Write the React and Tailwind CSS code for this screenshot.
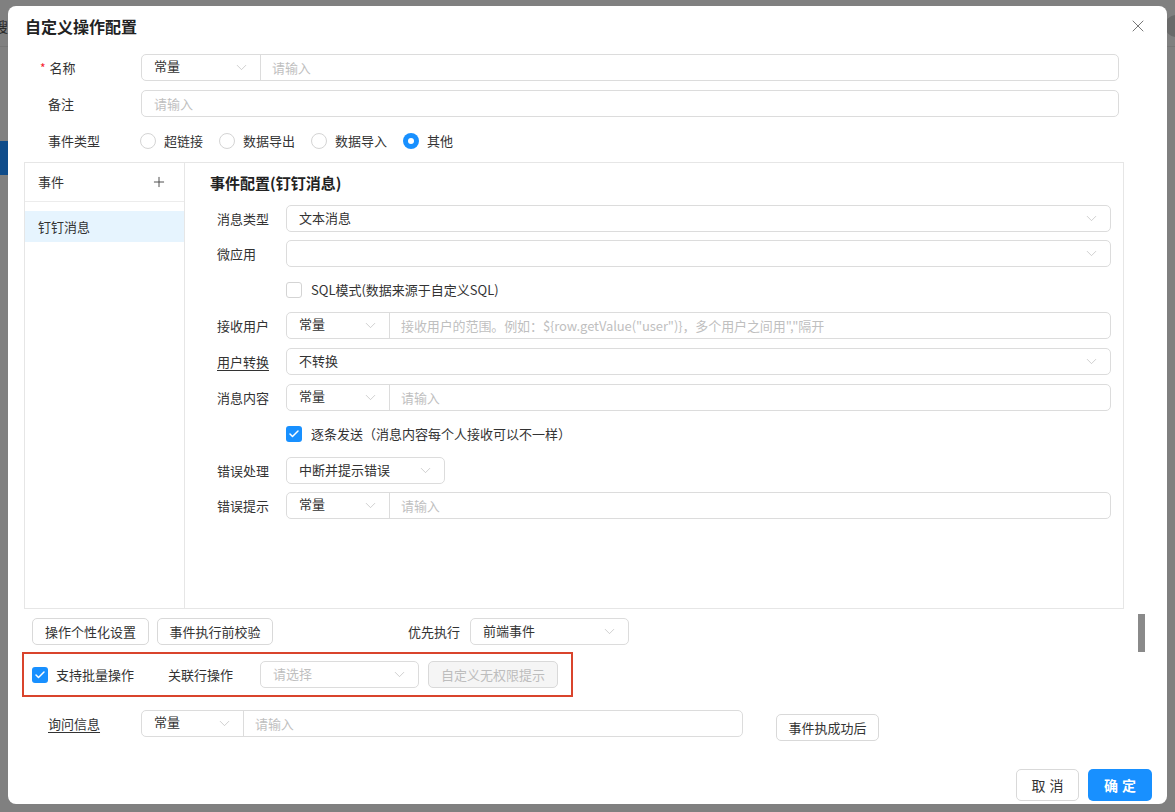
import { ChevronDown, X, Plus, Check } from 'lucide-react';

function Chevron() {
  return <ChevronDown size={17} strokeWidth={1} className="text-[#bdbdbd] shrink-0" />;
}

function Select({ value, placeholder, className = '' }) {
  return (
    <div className={`flex items-center justify-between h-[27px] border border-[#dcdcdc] rounded-[5px] bg-white pl-[12px] pr-[10px] ${className}`}>
      {value ? (
        <span className="text-[#333] pb-[2px]">{value}</span>
      ) : (
        <span className="text-[#bfbfbf] pb-[2px]">{placeholder || ''}</span>
      )}
      <Chevron />
    </div>
  );
}

function Group({ value = '常量', placeholder = '请输入', selW = 'w-[103px]', className = '' }) {
  return (
    <div className={`flex h-[27px] border border-[#dcdcdc] rounded-[5px] bg-white ${className}`}>
      <div className={`flex items-center justify-between pl-[12px] pr-[10px] border-r border-[#dcdcdc] ${selW}`}>
        <span className="text-[#333] pb-[3px]">{value}</span>
        <Chevron />
      </div>
      <div className="flex-1 flex items-center pl-[11px] text-[#bfbfbf] whitespace-nowrap overflow-hidden tracking-[-0.1px]">{placeholder}</div>
    </div>
  );
}

function Input({ placeholder = '请输入', className = '' }) {
  return (
    <div className={`flex items-center h-[27px] border border-[#dcdcdc] rounded-[5px] pl-[12px] text-[#bfbfbf] ${className}`}>
      {placeholder}
    </div>
  );
}

function Radio({ label, checked }) {
  return (
    <div className="flex items-center mr-[16px]">
      {checked ? (
        <div className="w-[16px] h-[16px] rounded-full bg-[#1890ff] flex items-center justify-center">
          <div className="w-[6px] h-[6px] rounded-full bg-white" />
        </div>
      ) : (
        <div className="w-[16px] h-[16px] rounded-full border border-[#d4d4d4] bg-white" />
      )}
      <span className="ml-[8px] text-[#333]">{label}</span>
    </div>
  );
}

function CheckBox({ checked }) {
  return checked ? (
    <div className="w-[16px] h-[16px] rounded-[3px] bg-[#1890ff] flex items-center justify-center shrink-0">
      <Check size={12} strokeWidth={3} className="text-white" />
    </div>
  ) : (
    <div className="w-[16px] h-[16px] rounded-[3px] border border-[#d4d4d4] bg-white shrink-0" />
  );
}

function Btn({ children, className = '' }) {
  return (
    <div className={`flex items-center justify-center h-[27px] border border-[#d9d9d9] rounded-[5px] bg-white text-[#333] ${className}`}>
      {children}
    </div>
  );
}

function FieldRow({ label, underline, children, className = '' }) {
  return (
    <div className={`flex items-center h-[27px] ${className}`}>
      <div className={`w-[69px] text-[#333] ${underline ? 'underline underline-offset-[3px]' : ''}`}>{label}</div>
      {children}
    </div>
  );
}

export default function App() {
  return (
    <div className="relative w-full h-[812px] overflow-hidden bg-[#808080] font-['Noto_Sans_CJK_SC','Noto_Sans',sans-serif] text-[13px]">
      {/* dimmed page behind the modal */}
      <div className="flex flex-col">
        <div className="h-[47px] border-b border-[#767676] flex items-center">
          <span className="-ml-[6px] mt-[6px] text-[#2a2a2a] text-[14px]">搜</span>
        </div>
        <div className="h-[94px]" />
        <div className="h-[34px] w-[30px] bg-[#0f4c8a]" />
      </div>
      <div className="absolute right-[-14px] top-[15px] w-[24px] h-[22px] rounded-full bg-[#6a6a6a]" />

      {/* modal */}
      <div className="absolute left-[8px] top-[6px] w-[1159px] h-[798px] bg-white rounded-[8px] flex flex-col">
        <div className="flex items-center justify-between h-[40px] pl-[17px] pr-[19px]">
          <span className="text-[16px] font-bold text-[#222]">自定义操作配置</span>
          <X size={20} strokeWidth={1.2} className="text-[#777]" />
        </div>

        <div className="flex items-center h-[27px] mt-[8px]">
          <div className="w-[133px] pl-[32px] flex items-center text-[#333]">
            <span className="text-[#f5222d] mr-[4px] text-[12px]">*</span>
            <span>名称</span>
          </div>
          <Group selW="w-[119px]" className="w-[978px]" />
        </div>

        <div className="flex items-center h-[27px] mt-[9px]">
          <div className="w-[133px] pl-[40px] text-[#333]">备注</div>
          <Input className="w-[978px]" />
        </div>

        <div className="flex items-center h-[20px] mt-[14px]">
          <div className="w-[132px] pl-[40px] text-[#333]">事件类型</div>
          <Radio label="超链接" />
          <Radio label="数据导出" />
          <Radio label="数据导入" />
          <Radio label="其他" checked />
        </div>

        {/* event panel */}
        <div className="ml-[16px] mt-[11px] w-[1100px] h-[447px] border border-[#e6e6e6] flex">
          <div className="w-[160px] border-r border-[#e6e6e6] flex flex-col">
            <div className="h-[39px] border-b border-[#ececec] flex items-center justify-between pl-[13px] pr-[17px]">
              <span className="text-[#333]">事件</span>
              <Plus size={16} strokeWidth={1.4} className="text-[#444]" />
            </div>
            <div className="mt-[9px] h-[31px] bg-[#e6f4fe] flex items-center pl-[13px] text-[#333]">钉钉消息</div>
          </div>

          <div className="flex-1 flex flex-col pr-[12px]">
            <div className="pl-[25px] mt-[10px] h-[20px] flex items-center text-[15px] font-bold text-[#222]">事件配置(钉钉消息)</div>

            <div className="pl-[32px] flex flex-col">
              <FieldRow label="消息类型" className="mt-[12px]">
                <Select value="文本消息" className="flex-1" />
              </FieldRow>
              <FieldRow label="微应用" className="mt-[8px]">
                <Select className="flex-1" />
              </FieldRow>
              <div className="flex items-center h-[16px] mt-[15px] pl-[69px]">
                <CheckBox />
                <span className="ml-[9px] text-[#333]">SQL模式(数据来源于自定义SQL)</span>
              </div>
              <FieldRow label="接收用户" className="mt-[14px]">
                <Group
                  className="flex-1"
                  placeholder={'接收用户的范围。例如：${row.getValue("user")}，多个用户之间用","隔开'}
                />
              </FieldRow>
              <FieldRow label="用户转换" underline className="mt-[9px]">
                <Select value="不转换" className="flex-1" />
              </FieldRow>
              <FieldRow label="消息内容" className="mt-[9px]">
                <Group className="flex-1" />
              </FieldRow>
              <div className="flex items-center h-[16px] mt-[15px] pl-[69px]">
                <CheckBox checked />
                <span className="ml-[9px] text-[#333]">逐条发送（消息内容每个人接收可以不一样）</span>
              </div>
              <FieldRow label="错误处理" className="mt-[15px]">
                <Select value="中断并提示错误" className="w-[159px]" />
              </FieldRow>
              <FieldRow label="错误提示" className="mt-[8px]">
                <Group className="flex-1" />
              </FieldRow>
            </div>
          </div>
        </div>

        {/* toolbar row */}
        <div className="flex items-center h-[27px] mt-[9px] ml-[24px]">
          <Btn className="w-[117px]">操作个性化设置</Btn>
          <Btn className="w-[116px] ml-[8px]">事件执行前校验</Btn>
          <span className="ml-[135px] text-[#333]">优先执行</span>
          <Select value="前端事件" className="w-[159px] ml-[10px]" />
        </div>

        {/* highlighted row */}
        <div className="ml-[14px] mt-[7px] w-[551px] h-[45px] border-2 border-[#d9442c] flex items-center pl-[8px]">
          <CheckBox checked />
          <span className="ml-[8px] text-[#333]">支持批量操作</span>
          <span className="ml-[34px] text-[#333]">关联行操作</span>
          <Select placeholder="请选择" className="w-[159px] ml-[27px]" />
          <div className="ml-[9px] w-[130px] h-[27px] rounded-[5px] border border-[#d9d9d9] bg-[#f5f5f5] text-[#bdbdbd] flex items-center justify-center">
            自定义无权限提示
          </div>
        </div>

        {/* ask row */}
        <div className="flex items-start mt-[13px]">
          <div className="w-[133px] pl-[40px] h-[27px] flex items-center">
            <span className="text-[#333] underline underline-offset-[3px]">询问信息</span>
          </div>
          <Group selW="w-[102px]" className="w-[602px]" />
          <Btn className="w-[103px] ml-[33px] mt-[4px]">事件执成功后</Btn>
        </div>

        {/* footer */}
        <div className="flex justify-end pr-[15px] mt-[28px] gap-[9px]">
          <div className="w-[63px] h-[32px] rounded-[5px] border border-[#d9d9d9] flex items-center justify-center text-[14px] text-[#333] tracking-[4px] pl-[4px]">取消</div>
          <div className="w-[64px] h-[32px] rounded-[5px] bg-[#1890ff] flex items-center justify-center text-[14px] text-white font-bold tracking-[4px] pl-[4px]">确定</div>
        </div>

        {/* scrollbar thumb */}
        <div className="absolute left-[1130px] top-[608px] w-[7px] h-[38px] bg-[#8a8a8a]" />
      </div>
    </div>
  );
}
